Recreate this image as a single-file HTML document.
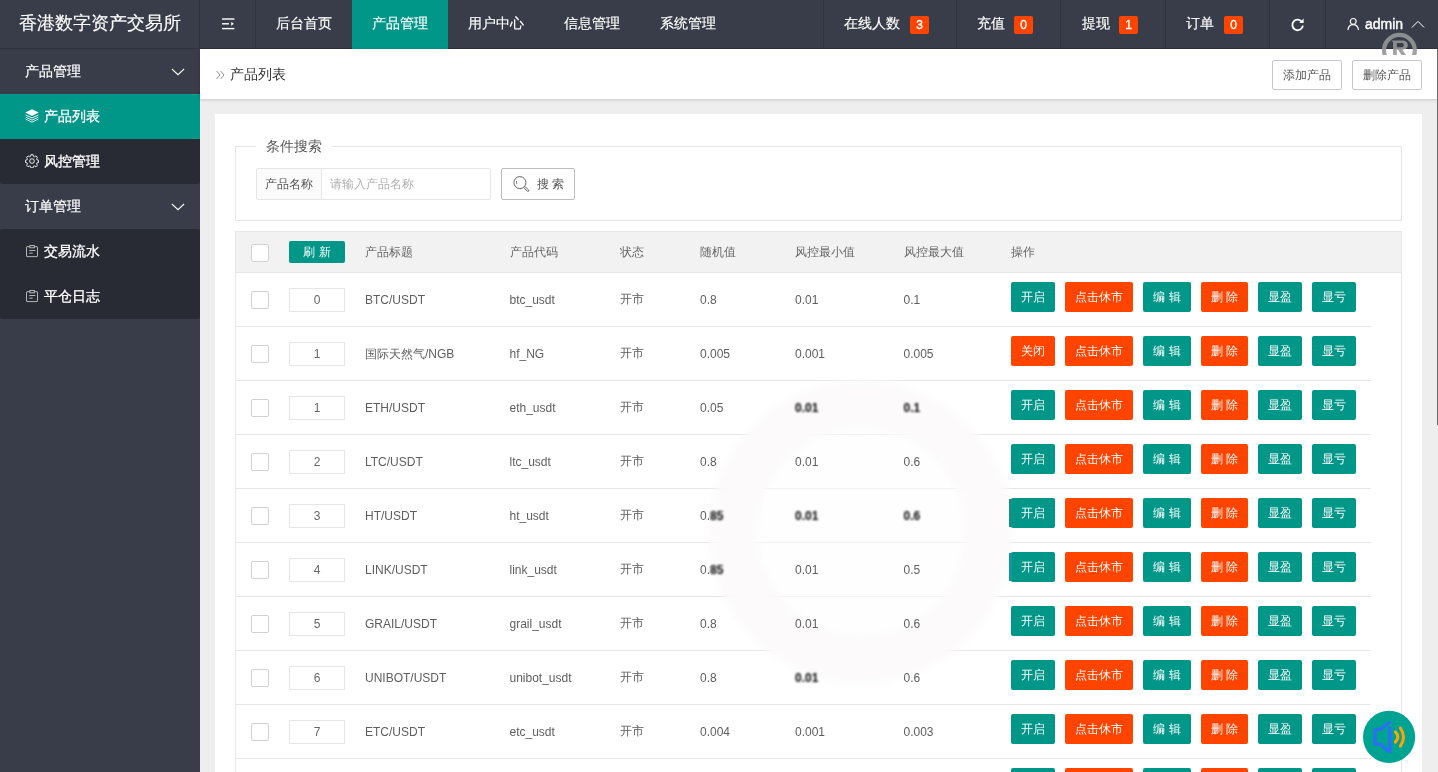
<!DOCTYPE html>
<html lang="zh">
<head>
<meta charset="utf-8">
<title>产品列表</title>
<style>
*{box-sizing:border-box;margin:0;padding:0}
html,body{width:1438px;height:772px;overflow:hidden}
body{will-change:transform;white-space:nowrap;position:relative;background:#eeeeee;font-family:"Liberation Sans",sans-serif;font-size:14px;color:#333;line-height:1}
.abs{position:absolute}
/* header */
#hd{position:absolute;left:0;top:0;width:1438px;height:49px;background:#393d49;border-bottom:1px solid #2f323c}
#logo{-webkit-text-stroke:.15px #fff;position:absolute;left:0;top:0;width:200px;height:48px;line-height:47px;text-align:center;color:#fff;font-size:18px;border-right:1px solid #2f323c}
.nav{-webkit-text-stroke:.15px #fff;position:absolute;top:0;height:48px;line-height:47px;color:#fff;font-size:14px;text-align:left;white-space:nowrap;border-right:1px solid #30333d}
.nav.on{background:#009688;border-right:none}
.nav.r{border-right:none;border-left:1px solid #30333d}
.bdg{-webkit-text-stroke:.35px #fff;position:absolute;top:16px;height:18px;width:19px;line-height:18px;background:#ff4400;color:#fff;font-size:12px;text-align:center;border-radius:2px}
/* side */
#side{position:absolute;left:0;top:49px;width:200px;height:723px;background:#393d49}
.grp{-webkit-text-stroke:.2px #fff;position:absolute;left:0;width:200px;height:45px;line-height:45px;color:#fff;font-size:14px;padding-left:25px}
.sub{-webkit-text-stroke:.3px #fff;position:absolute;left:0;width:200px;height:45px;line-height:45px;color:#fff;font-size:14px;padding-left:44px;background:#282b33}
.sub.on{background:#009688}
.sub svg,.grp svg{position:absolute}
/* crumb */
#crumb{position:absolute;left:200px;top:49px;width:1238px;height:50px;background:#fff;box-shadow:0 1px 3px rgba(0,0,0,.16)}
.btnp{position:absolute;height:30px;line-height:28px;border:1px solid #c9c9c9;border-radius:2px;background:#fff;color:#555;font-size:12px;text-align:center}
/* card */
#card{position:absolute;left:215px;top:114px;width:1207px;height:700px;background:#fff}
#fs{position:absolute;left:235px;top:146px;width:1167px;height:75px;border:1px solid #e6e6e6}
#lg{overflow:hidden;position:absolute;left:256px;top:136px;width:76px;height:20px;line-height:20px;background:#fff;color:#555;font-size:14px;text-align:center}
#lab{overflow:hidden;position:absolute;left:256px;top:168px;width:66px;height:32px;line-height:30px;border:1px solid #e6e6e6;background:#fbfbfb;border-radius:2px 0 0 2px;color:#555;font-size:12px;text-align:center}
#inp{overflow:hidden;position:absolute;left:321px;top:168px;width:170px;height:32px;line-height:30px;border:1px solid #e6e6e6;background:#fff;border-radius:0 2px 2px 0;color:#b0b0b0;font-size:12px;padding-left:8px}
#sbtn{position:absolute;left:501px;top:168px;width:74px;height:32px;line-height:30px;border:1px solid #bdbdbd;border-radius:2px;background:#fff;color:#555;font-size:12px}
/* table */
#tb{position:absolute;left:235px;top:231px;width:1167px;height:560px;border:1px solid #e6e6e6;border-bottom:none}
#th{position:absolute;left:236px;top:232px;width:1165px;height:41px;background:#f2f2f2;border-bottom:1px solid #e6e6e6}
.hc{position:absolute;top:232px;height:40px;line-height:40px;font-size:12px;color:#666;white-space:nowrap}
.row{position:absolute;left:236px;width:1135px;height:54px;border-bottom:1px solid #e6e6e6}
.c{z-index:2;position:absolute;top:0;height:53px;line-height:55px;font-size:12px;color:#5e5e5e;white-space:nowrap}
.cb{position:absolute;left:15px;top:18px;width:18px;height:18px;border:1px solid #d2d2d2;border-radius:2px;background:#fff}
.si{position:absolute;left:53px;top:15px;width:56px;height:24px;line-height:23px;border:1px solid #e6e6e6;background:#fff;font-size:12px;color:#666;text-align:center}
.b{z-index:2;position:absolute;top:9px;height:30px;line-height:30px;border-radius:2px;color:#fff;font-size:12px;text-align:center;background:#009688;white-space:nowrap}
.b.o{background:#ff4400}
.sm{filter:blur(1px);font-weight:bold;color:#000}
</style>
</head>
<body>
<div id="hd">
<div id="logo">香港数字资产交易所</div>
<div class="abs" style="left:255px;top:0;width:1px;height:48px;background:#30333d"></div>
<svg class="abs" style="left:221px;top:17px" width="14" height="14" viewBox="0 0 14 14"><g fill="#fff"><rect x="1" y="1.3" width="12.4" height="1.4"/><rect x="1" y="6.1" width="7" height="1.4"/><rect x="1" y="10.9" width="12.4" height="1.4"/><path d="M10.2 4.9 L12.9 6.8 L10.2 8.7 Z"/></g></svg>
<div class="nav" style="left:276px;width:56px;text-align:center;border:none">后台首页</div>
<div class="abs" style="left:352px;top:0;width:96px;height:49px;background:#009688"></div>
<div class="nav" style="left:372px;width:56px;text-align:center;border:none">产品管理</div>
<div class="nav" style="left:468px;width:56px;text-align:center;border:none">用户中心</div>
<div class="nav" style="left:564px;width:56px;text-align:center;border:none">信息管理</div>
<div class="nav" style="left:660px;width:56px;text-align:center;border:none">系统管理</div>
<div class="abs" style="left:823px;top:0;width:1px;height:48px;background:#30333d"></div>
<div class="nav" style="left:844px;width:56px;text-align:center;border:none">在线人数</div><div class="bdg" style="left:910px">3</div>
<div class="abs" style="left:956px;top:0;width:1px;height:48px;background:#30333d"></div>
<div class="nav" style="left:977px;width:28px;text-align:center;border:none">充值</div><div class="bdg" style="left:1014px">0</div>
<div class="abs" style="left:1060px;top:0;width:1px;height:48px;background:#30333d"></div>
<div class="nav" style="left:1081.5px;width:28px;text-align:center;border:none">提现</div><div class="bdg" style="left:1119px">1</div>
<div class="abs" style="left:1165px;top:0;width:1px;height:48px;background:#30333d"></div>
<div class="nav" style="left:1186px;width:28px;text-align:center;border:none">订单</div><div class="bdg" style="left:1224px">0</div>
<div class="abs" style="left:1269px;top:0;width:1px;height:48px;background:#30333d"></div>
<svg class="abs" style="left:1290px;top:17px" width="15" height="15" viewBox="0 0 15 15"><path d="M12.2 5.2 A5.3 5.3 0 1 0 12.9 8.6" fill="none" stroke="#fff" stroke-width="1.85"/><path d="M9.3 5.9 L13.6 5.9 L13.6 1.6 Z" fill="#fff"/></svg>
<div class="abs" style="left:1325px;top:0;width:1px;height:48px;background:#30333d"></div>
<svg class="abs" style="left:1346px;top:17px" width="14" height="14" viewBox="0 0 14 14"><g fill="none" stroke="#fff" stroke-width="1.2"><circle cx="7.2" cy="4.4" r="2.9"/><path d="M1.9 13 C2.3 9.6 4.4 7.6 7.2 7.6 C10 7.6 12.1 9.6 12.5 13"/></g></svg>
<div class="nav" style="left:1365px;top:1px;border:none;-webkit-text-stroke:.4px #fff">admin</div>
<svg class="abs" style="left:1411px;top:19px" width="14" height="10" viewBox="0 0 14 10"><path d="M0.9 8.5 L7 2.4 L13.1 8.5" fill="none" stroke="#fff" stroke-width="1"/></svg>
</div>
<div id="side">
<div class="grp" style="top:0">产品管理<svg style="left:171px;top:18px" width="14" height="10" viewBox="0 0 14 10"><path d="M0.9 2 L7 7.7 L13.1 2" fill="none" stroke="#fff" stroke-width="1.05"/></svg></div>
<div class="sub on" style="top:45px"><svg style="left:25px;top:15px" width="14" height="14" viewBox="0 0 14 14"><path d="M7 0.3 L13.8 3.6 L7 6.9 L0.2 3.6 Z" fill="#fff"/><g fill="none" stroke="#fff" stroke-width="0.9"><path d="M0.6 5.9 L7 9 L13.4 5.9"/><path d="M0.6 8 L7 11.1 L13.4 8"/><path d="M0.6 10.1 L7 13.2 L13.4 10.1"/></g></svg>产品列表</div>
<div class="sub" style="top:90px;border-radius:0 0 2px 2px"><svg style="left:25px;top:15px" width="14" height="14" viewBox="0 0 14 14"><g fill="none" stroke="#fff" stroke-width="0.9"><circle cx="7" cy="7" r="2.3"/><path d="M5.9 0.7 h2.2 l0.3 1.6 l1.2 0.5 l1.35 -0.95 l1.55 1.55 l-0.95 1.35 l0.5 1.2 l1.6 0.3 v2.2 l-1.6 0.3 l-0.5 1.2 l0.95 1.35 l-1.55 1.55 l-1.35 -0.95 l-1.2 0.5 l-0.3 1.6 h-2.2 l-0.3 -1.6 l-1.2 -0.5 l-1.35 0.95 l-1.55 -1.55 l0.95 -1.35 l-0.5 -1.2 l-1.6 -0.3 v-2.2 l1.6 -0.3 l0.5 -1.2 l-0.95 -1.35 l1.55 -1.55 l1.35 0.95 l1.2 -0.5 z"/></g></svg>风控管理</div>
<div class="grp" style="top:135px">订单管理<svg style="left:171px;top:18px" width="14" height="10" viewBox="0 0 14 10"><path d="M0.9 2 L7 7.7 L13.1 2" fill="none" stroke="#fff" stroke-width="1.05"/></svg></div>
<div class="sub" style="top:180px;border-radius:2px 2px 0 0"><svg style="left:26px;top:16px" width="12" height="13" viewBox="0 0 12 13"><g fill="none" stroke="#c4c4c4" stroke-width="0.9"><rect x="0.5" y="1.7" width="11" height="9.9" rx="0.5"/><rect x="3.9" y="0.5" width="4.4" height="2.3" fill="#282b33"/><path d="M3.3 5.5 h6 M3.3 8.1 h3.4"/></g></svg>交易流水</div>
<div class="sub" style="top:225px;border-radius:0 0 2px 2px"><svg style="left:26px;top:16px" width="12" height="13" viewBox="0 0 12 13"><g fill="none" stroke="#c4c4c4" stroke-width="0.9"><rect x="0.5" y="1.7" width="11" height="9.9" rx="0.5"/><rect x="3.9" y="0.5" width="4.4" height="2.3" fill="#282b33"/><path d="M3.3 5.5 h6 M3.3 8.1 h3.4"/></g></svg>平仓日志</div>
</div>
<div id="crumb">
<svg class="abs" style="left:15.7px;top:21px" width="9" height="10" viewBox="0 0 9 10"><g fill="none" stroke="#888" stroke-width="0.95"><path d="M0.6 1 L4 5 L0.6 9"/><path d="M4.6 1 L8 5 L4.6 9"/></g></svg>
<div class="abs" style="left:30px;top:0;height:50px;line-height:51px;font-size:14px;color:#333">产品列表</div>
<div class="btnp" style="left:1072px;top:11px;width:70px">添加产品</div>
<div class="btnp" style="left:1152px;top:11px;width:70px">删除产品</div>
</div>
<div id="card"></div>
<div id="fs"></div>
<div id="lg">条件搜索</div>
<div id="lab">产品名称</div>
<div id="inp">请输入产品名称</div>
<div id="sbtn"><svg class="abs" style="left:11px;top:7px" width="17" height="17" viewBox="0 0 17 17"><g fill="none" stroke="#555" stroke-width="0.9"><circle cx="6.9" cy="6.6" r="6"/><path d="M3.6 5.2 C3.3 6.1 3.4 7 3.8 7.8"/><path d="M11.3 12.3 L12.6 11.1 L15.7 14 C16.4 14.8 15.2 16 14.4 15.2 Z"/></g></svg><span class="abs" style="left:35px;top:0">搜 索</span></div>
<div id="tb"></div>
<div id="th"></div>
<div class="cb" style="left:251px;top:244px"></div>
<div class="b" style="left:289px;top:241px;width:56px;height:22px;line-height:22px">刷 新</div>
<div class="hc" style="left:365px">产品标题</div>
<div class="hc" style="left:509.5px">产品代码</div>
<div class="hc" style="left:620px">状态</div>
<div class="hc" style="left:700px">随机值</div>
<div class="hc" style="left:795px">风控最小值</div>
<div class="hc" style="left:903.5px">风控最大值</div>
<div class="hc" style="left:1011px">操作</div>
<div class="row" style="top:273px"><div class="cb"></div><div class="si">0</div><div class="c" style="left:129px">BTC/USDT</div><div class="c" style="left:273.5px">btc_usdt</div><div class="c" style="left:384px;line-height:53px">开市</div><div class="c" style="left:464px">0.8</div><div class="c" style="left:559px">0.01</div><div class="c" style="left:667.5px">0.1</div><div class="b" style="left:775px;width:44px">开启</div><div class="b o" style="left:829px;width:68px">点击休市</div><div class="b" style="left:907px;width:48px">编 辑</div><div class="b o" style="left:965px;width:47px">删 除</div><div class="b" style="left:1022px;width:44px">显盈</div><div class="b" style="left:1076px;width:44px">显亏</div></div>
<div class="row" style="top:327px"><div class="cb"></div><div class="si">1</div><div class="c" style="left:129px">国际天然气/NGB</div><div class="c" style="left:273.5px">hf_NG</div><div class="c" style="left:384px;line-height:53px">开市</div><div class="c" style="left:464px">0.005</div><div class="c" style="left:559px">0.001</div><div class="c" style="left:667.5px">0.005</div><div class="b o" style="left:775px;width:44px">关闭</div><div class="b o" style="left:829px;width:68px">点击休市</div><div class="b" style="left:907px;width:48px">编 辑</div><div class="b o" style="left:965px;width:47px">删 除</div><div class="b" style="left:1022px;width:44px">显盈</div><div class="b" style="left:1076px;width:44px">显亏</div></div>
<div class="row" style="top:381px"><div class="cb"></div><div class="si">1</div><div class="c" style="left:129px">ETH/USDT</div><div class="c" style="left:273.5px">eth_usdt</div><div class="c" style="left:384px;line-height:53px">开市</div><div class="c" style="left:464px">0.05</div><div class="c sm" style="left:559px">0.01</div><div class="c sm" style="left:667.5px">0.1</div><div class="b" style="left:775px;width:44px">开启</div><div class="b o" style="left:829px;width:68px">点击休市</div><div class="b" style="left:907px;width:48px">编 辑</div><div class="b o" style="left:965px;width:47px">删 除</div><div class="b" style="left:1022px;width:44px">显盈</div><div class="b" style="left:1076px;width:44px">显亏</div></div>
<div class="row" style="top:435px"><div class="cb"></div><div class="si">2</div><div class="c" style="left:129px">LTC/USDT</div><div class="c" style="left:273.5px">ltc_usdt</div><div class="c" style="left:384px;line-height:53px">开市</div><div class="c" style="left:464px">0.8</div><div class="c" style="left:559px">0.01</div><div class="c" style="left:667.5px">0.6</div><div class="b" style="left:775px;width:44px">开启</div><div class="b o" style="left:829px;width:68px">点击休市</div><div class="b" style="left:907px;width:48px">编 辑</div><div class="b o" style="left:965px;width:47px">删 除</div><div class="b" style="left:1022px;width:44px">显盈</div><div class="b" style="left:1076px;width:44px">显亏</div></div>
<div class="row" style="top:489px"><div class="cb"></div><div class="si">3</div><div class="c" style="left:129px">HT/USDT</div><div class="c" style="left:273.5px">ht_usdt</div><div class="c" style="left:384px;line-height:53px">开市</div><div class="c" style="left:464px">0.<span class="sm" style="display:inline-block">85</span></div><div class="c sm" style="left:559px">0.01</div><div class="c sm" style="left:667.5px">0.6</div><div class="b" style="left:775px;width:44px">开启</div><div class="b o" style="left:829px;width:68px">点击休市</div><div class="b" style="left:907px;width:48px">编 辑</div><div class="b o" style="left:965px;width:47px">删 除</div><div class="b" style="left:1022px;width:44px">显盈</div><div class="b" style="left:1076px;width:44px">显亏</div></div>
<div class="row" style="top:543px"><div class="cb"></div><div class="si">4</div><div class="c" style="left:129px">LINK/USDT</div><div class="c" style="left:273.5px">link_usdt</div><div class="c" style="left:384px;line-height:53px">开市</div><div class="c" style="left:464px">0.<span class="sm" style="display:inline-block">85</span></div><div class="c" style="left:559px">0.01</div><div class="c" style="left:667.5px">0.5</div><div class="b" style="left:775px;width:44px">开启</div><div class="b o" style="left:829px;width:68px">点击休市</div><div class="b" style="left:907px;width:48px">编 辑</div><div class="b o" style="left:965px;width:47px">删 除</div><div class="b" style="left:1022px;width:44px">显盈</div><div class="b" style="left:1076px;width:44px">显亏</div></div>
<div class="row" style="top:597px"><div class="cb"></div><div class="si">5</div><div class="c" style="left:129px">GRAIL/USDT</div><div class="c" style="left:273.5px">grail_usdt</div><div class="c" style="left:384px;line-height:53px">开市</div><div class="c" style="left:464px">0.8</div><div class="c" style="left:559px">0.01</div><div class="c" style="left:667.5px">0.6</div><div class="b" style="left:775px;width:44px">开启</div><div class="b o" style="left:829px;width:68px">点击休市</div><div class="b" style="left:907px;width:48px">编 辑</div><div class="b o" style="left:965px;width:47px">删 除</div><div class="b" style="left:1022px;width:44px">显盈</div><div class="b" style="left:1076px;width:44px">显亏</div></div>
<div class="row" style="top:651px"><div class="cb"></div><div class="si">6</div><div class="c" style="left:129px">UNIBOT/USDT</div><div class="c" style="left:273.5px">unibot_usdt</div><div class="c" style="left:384px;line-height:53px">开市</div><div class="c" style="left:464px">0.8</div><div class="c sm" style="left:559px">0.01</div><div class="c" style="left:667.5px">0.6</div><div class="b" style="left:775px;width:44px">开启</div><div class="b o" style="left:829px;width:68px">点击休市</div><div class="b" style="left:907px;width:48px">编 辑</div><div class="b o" style="left:965px;width:47px">删 除</div><div class="b" style="left:1022px;width:44px">显盈</div><div class="b" style="left:1076px;width:44px">显亏</div></div>
<div class="row" style="top:705px"><div class="cb"></div><div class="si">7</div><div class="c" style="left:129px">ETC/USDT</div><div class="c" style="left:273.5px">etc_usdt</div><div class="c" style="left:384px;line-height:53px">开市</div><div class="c" style="left:464px">0.004</div><div class="c" style="left:559px">0.001</div><div class="c" style="left:667.5px">0.003</div><div class="b" style="left:775px;width:44px">开启</div><div class="b o" style="left:829px;width:68px">点击休市</div><div class="b" style="left:907px;width:48px">编 辑</div><div class="b o" style="left:965px;width:47px">删 除</div><div class="b" style="left:1022px;width:44px">显盈</div><div class="b" style="left:1076px;width:44px">显亏</div></div>
<div class="row" style="top:759px"><div class="cb"></div><div class="si">8</div><div class="c" style="left:129px">BCH/USDT</div><div class="c" style="left:273.5px">bch_usdt</div><div class="c" style="left:384px;line-height:53px">开市</div><div class="c" style="left:464px">0.8</div><div class="c" style="left:559px">0.01</div><div class="c" style="left:667.5px">0.6</div><div class="b" style="left:775px;width:44px">开启</div><div class="b o" style="left:829px;width:68px">点击休市</div><div class="b" style="left:907px;width:48px">编 辑</div><div class="b o" style="left:965px;width:47px">删 除</div><div class="b" style="left:1022px;width:44px">显盈</div><div class="b" style="left:1076px;width:44px">显亏</div></div>
<svg class="abs" style="z-index:1;left:690px;top:362px" width="340" height="340" viewBox="0 0 340 340"><defs><filter id="rb" x="-10%" y="-10%" width="120%" height="120%"><feGaussianBlur stdDeviation="3.5"/></filter></defs><g filter="url(#rb)"><circle cx="171" cy="170" r="150" fill="#fefdfd" opacity=".5"/><circle cx="171" cy="170" r="128" fill="none" stroke="#fdfbfb" stroke-width="48" opacity=".9"/></g></svg>
<div class="abs" style="z-index:3;left:1009px;top:499px;width:3px;height:28px;background:#138f85;filter:blur(.4px)"></div>
<div class="abs" style="z-index:3;left:1009px;top:553px;width:3px;height:28px;background:#1296a0;filter:blur(.4px)"></div>
<div class="abs" style="left:1437px;top:49px;width:1px;height:376px;background:#6a6a6a"></div>
<svg class="abs" style="left:1380px;top:32px;opacity:.89" width="40" height="23" viewBox="0 0 40 23"><circle cx="19.4" cy="18.3" r="15.4" fill="none" stroke="#979797" stroke-width="4.2"/><path fill="#979797" fill-rule="evenodd" d="M11.6 8.4 H22.6 C29.6 8.4 29.6 17.7 22.6 17.7 L22.3 17.7 L27.5 25 H22.9 L18 17.7 H16.8 V25 H13.1 V9.6 L11.6 9.4 Z M16.8 10.9 H22 C24.4 10.9 24.4 15.2 22 15.2 H16.8 Z"/></svg>
<svg class="abs" style="left:1362px;top:710px" width="54" height="54" viewBox="0 0 54 54"><circle cx="27.1" cy="26.9" r="26.1" fill="#00a391"/><path d="M27.6 12.4 L18.4 19.5 L14.6 19.5 Q13 19.5 13 21.1 L13 32.7 Q13 34.3 14.6 34.3 L18.8 34.3 L26.6 41.5 L27.9 41.5 L27.9 18" fill="none" stroke="#2f6bff" stroke-width="3" stroke-linejoin="round" stroke-linecap="round"/><path d="M33.4 21.8 Q38.2 27 33.4 32.1" fill="none" stroke="#ffa500" stroke-width="3" stroke-linecap="round"/><path d="M38.4 18 Q44.6 27.1 38.4 36.2" fill="none" stroke="#ffa500" stroke-width="3" stroke-linecap="round"/></svg>
</body>
</html>
